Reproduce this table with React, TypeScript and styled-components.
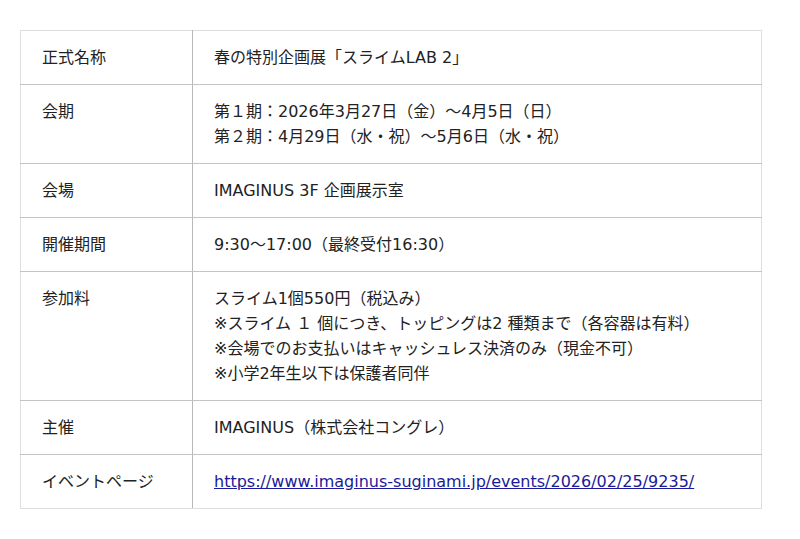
import React from 'react';
import styled, {createGlobalStyle} from "styled-components";

const GlobalStyle = createGlobalStyle`
    body {
        margin: 0;
        background: #fff;
        font-family: "DejaVu Sans", "Noto Sans CJK JP", sans-serif;
        color: #222;
    }
`

type Row = {
    label: string
    lines: string[]
    link?: boolean
}

const rows: Row[] = [
    {label: "正式名称", lines: ["春の特別企画展「スライムLAB 2」"]},
    {label: "会期", lines: ["第１期：2026年3月27日（金）～4月5日（日）", "第２期：4月29日（水・祝）～5月6日（水・祝）"]},
    {label: "会場", lines: ["IMAGINUS 3F 企画展示室"]},
    {label: "開催期間", lines: ["9:30～17:00（最終受付16:30）"]},
    {
        label: "参加料", lines: [
            "スライム1個550円（税込み）",
            "※スライム １ 個につき、トッピングは2 種類まで（各容器は有料）",
            "※会場でのお支払いはキャッシュレス決済のみ（現金不可）",
            "※小学2年生以下は保護者同伴",
        ]
    },
    {label: "主催", lines: ["IMAGINUS（株式会社コングレ）"]},
    {label: "イベントページ", lines: ["https://www.imaginus-suginami.jp/events/2026/02/25/9235/"], link: true},
]

export default function App() {
    return (
        <>
            <GlobalStyle/>
            <Page>
                <InfoTable>
                    <tbody>
                    {rows.map((row) => (
                        <tr key={row.label}>
                            <LabelCell>{row.label}</LabelCell>
                            <ValueCell>
                                {row.lines.map((line) => (
                                    <Line key={line}>
                                        {row.link ? <Link href={line}>{line}</Link> : line}
                                    </Line>
                                ))}
                            </ValueCell>
                        </tr>
                    ))}
                    </tbody>
                </InfoTable>
            </Page>
        </>
    );
}

const Page = styled.div`
    padding: 30px 38px 0 20px;
`

const InfoTable = styled.table`
    width: 742px;
    border-collapse: collapse;
    border: 1px solid #dedede;
    font-size: 16px;
    line-height: 25px;
`

const Cell = styled.td`
    vertical-align: top;
    padding: 14px 20px 14px 21px;
    border-top: 1px solid #c4c4c4;
    border-bottom: 1px solid #c4c4c4;
    tr:first-child > & {
        border-top-color: #dedede;
    }
    tr:last-child > & {
        border-bottom-color: #dedede;
    }
`

const LabelCell = styled(Cell)`
    width: 130px;
    border-right: 1px solid #b8b8b8;
`

const ValueCell = styled(Cell)``

const Line = styled.div`
    white-space: nowrap;
`

const Link = styled.a`
    color: #1a1a9a;
    text-decoration: underline;
`
